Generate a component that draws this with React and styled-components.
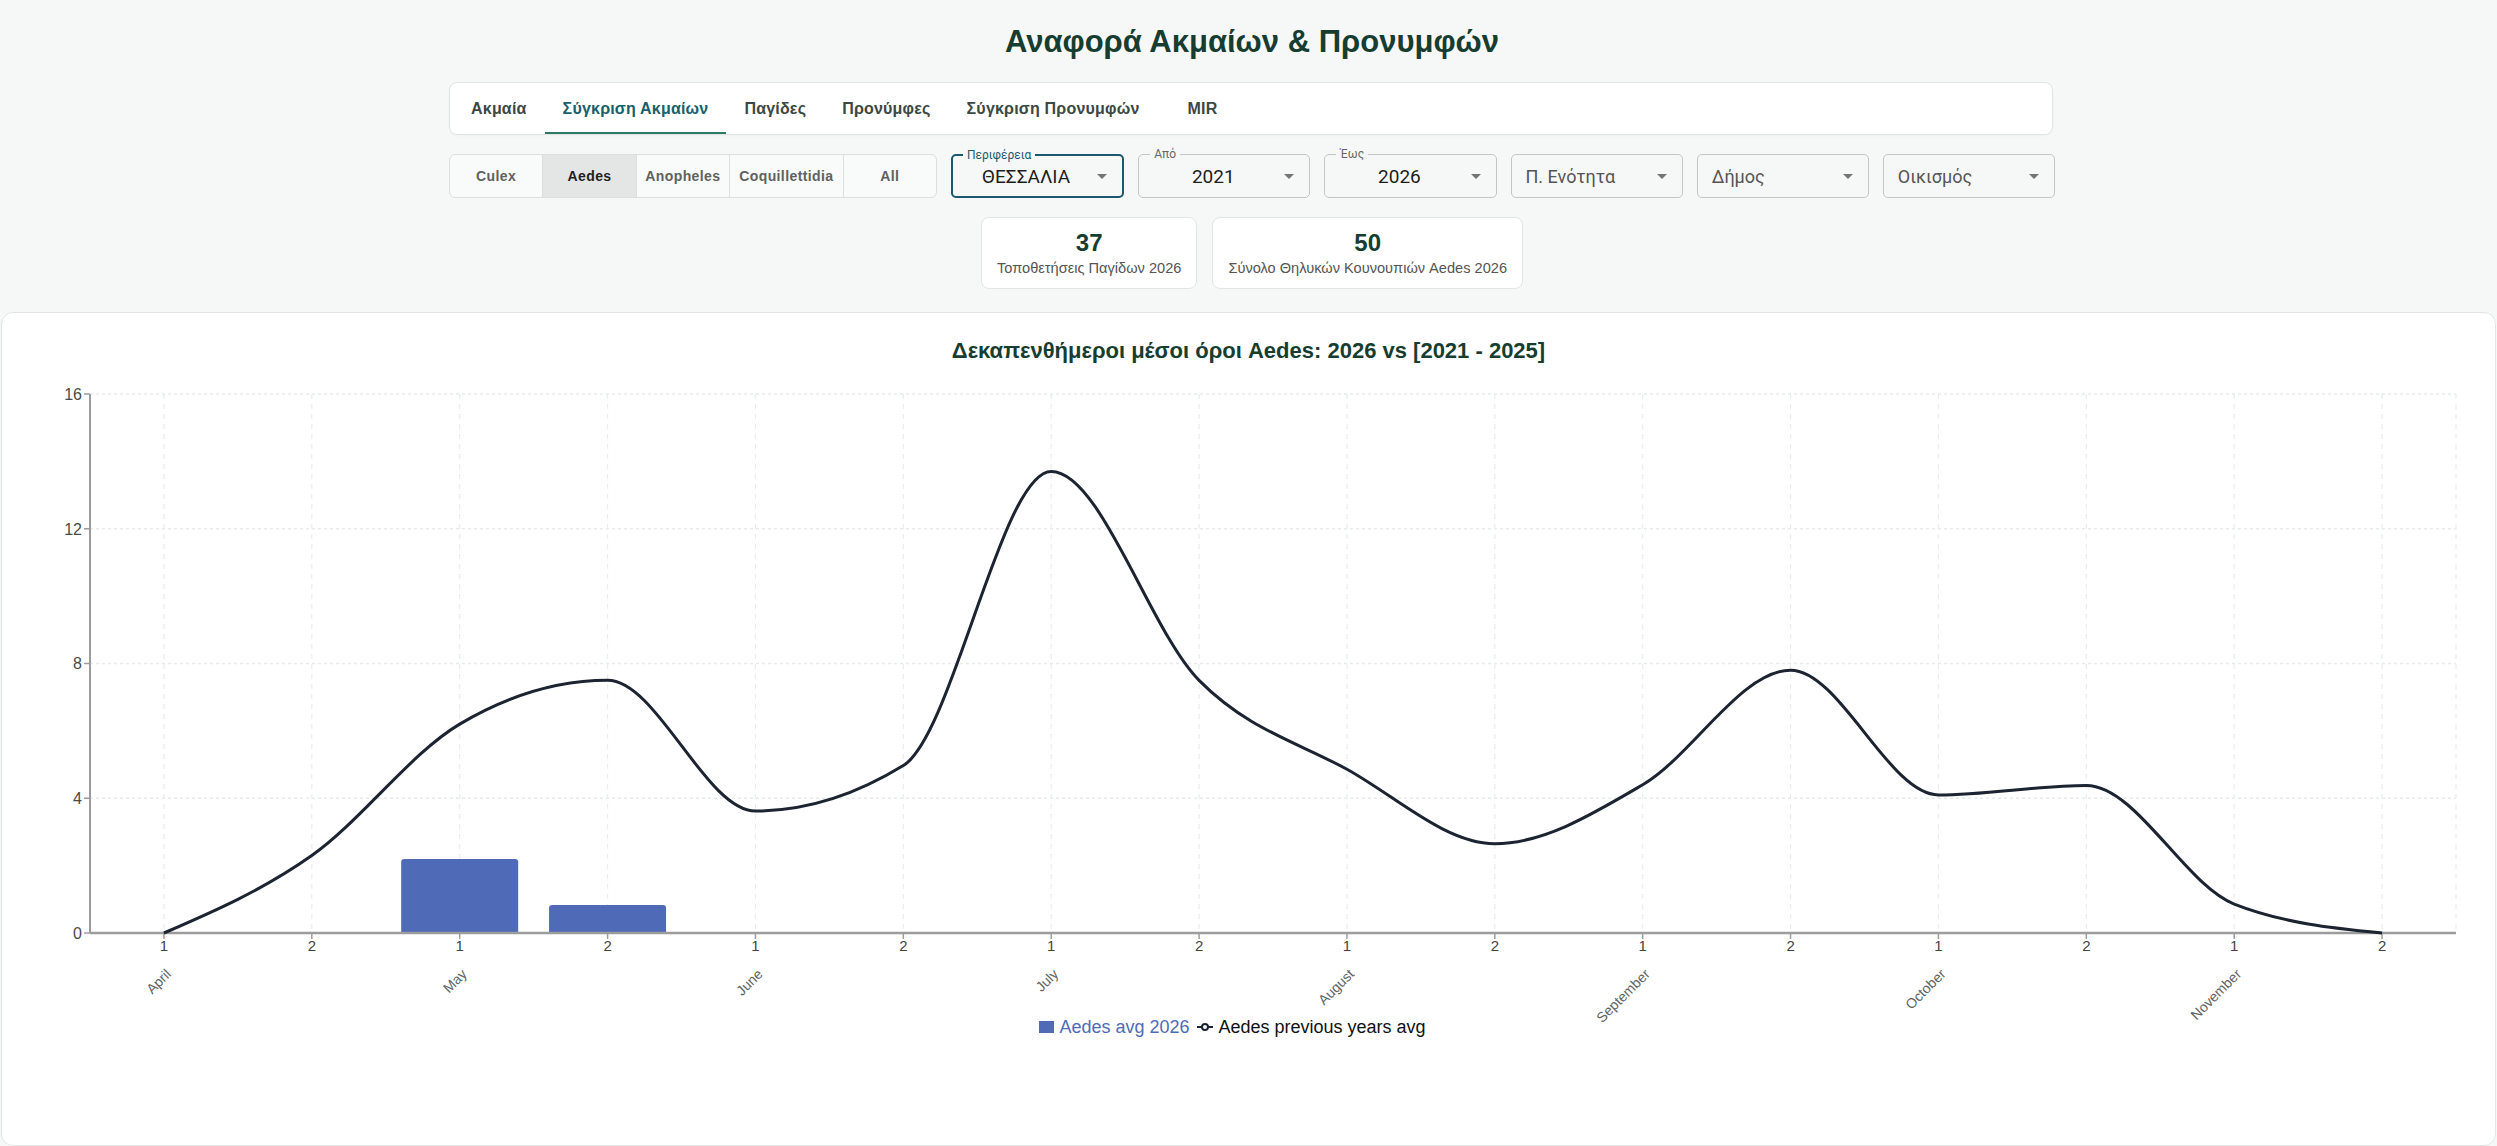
import React from 'react';
import styled, { createGlobalStyle } from 'styled-components';

const GlobalStyle = createGlobalStyle`
  html, body {
    margin: 0;
    padding: 0;
    background: #f6f8f7;
    font-family: "Liberation Sans", Arial, sans-serif;
  }
`;

const Page = styled.div`
  min-height: 1146px;
  padding-top: 23px;
`;

const Container = styled.div`
  width: 1606px;
  margin-left: 449px;
`;

const Title = styled.h1`
  margin: 0 0 21px;
  font-size: 31px;
  line-height: 38px;
  font-weight: 700;
  text-align: center;
  color: #173d31;
`;

const TabBar = styled.nav`
  display: flex;
  width: 1604px;
  height: 53px;
  padding: 0 3px;
  box-sizing: border-box;
  background: #fff;
  border: 1px solid #e0e5e3;
  border-radius: 8px;
  box-shadow: 0 1px 2px rgba(0, 0, 0, 0.03);
`;

const Tab = styled.div`
  display: flex;
  align-items: center;
  justify-content: center;
  min-width: 90px;
  padding: 2px 18px 0;
  box-sizing: border-box;
  font-size: 16px;
  font-weight: 700;
  letter-spacing: 0.2px;
  color: ${(p) => (p.$active ? '#17606d' : '#3b4843')};
  border-bottom: 2px solid ${(p) => (p.$active ? '#2d7a66' : 'transparent')};
`;

const FilterRow = styled.div`
  display: flex;
  gap: 14px;
  margin-top: 19px;
  height: 44px;
`;

const SpeciesGroup = styled.div`
  display: flex;
  width: 486px;
  flex: none;
  border: 1px solid #dcdfde;
  border-radius: 6px;
  overflow: hidden;
  background: #f9fafa;
`;

const SpeciesButton = styled.div`
  flex: ${(p) => (p.$wide ? '1.22' : '1')};
  display: flex;
  align-items: center;
  justify-content: center;
  font-size: 14px;
  font-weight: 700;
  letter-spacing: 0.4px;
  color: ${(p) => (p.$active ? '#1e1f1f' : '#5e625f')};
  background: ${(p) => (p.$active ? '#e4e6e5' : 'transparent')};
  & + & {
    border-left: 1px solid #dcdfde;
  }
`;

const SelectBox = styled.div`
  position: relative;
  flex: 1;
  display: flex;
  align-items: center;
  box-sizing: border-box;
  padding: 0 8px 0 ${(p) => (p.$focused ? '13px' : '14px')};
  border: ${(p) => (p.$focused ? '2px solid #1b5a6c' : '1px solid #c4c6c5')};
  border-radius: 5px;
  font-family: Roboto, "Liberation Sans", sans-serif;
`;

const FloatLabel = styled.span`
  position: absolute;
  top: -8px;
  left: ${(p) => (p.$focused ? '10px' : '11px')};
  padding: 0 4px;
  background: #f6f8f7;
  font-size: 12px;
  line-height: 14px;
  color: ${(p) => (p.$focused ? '#1b5a6c' : '#666')};
`;

const SelectValue = styled.span`
  flex: 1;
  font-size: ${(p) => (p.$placeholder ? '18px' : '19px')};
  text-align: ${(p) => (p.$placeholder ? 'left' : 'center')};
  color: ${(p) => (p.$placeholder ? '#555' : '#1d1d1d')};
  padding-right: ${(p) => (p.$placeholder ? '0' : '4px')};
`;

const Caret = styled.svg`
  width: 24px;
  height: 24px;
  flex: none;
  fill: #757575;
`;

const StatsRow = styled.div`
  display: flex;
  justify-content: center;
  gap: 15px;
  margin-top: 19px;
`;

const StatCard = styled.div`
  display: flex;
  flex-direction: column;
  align-items: center;
  padding: 12px 15px;
  background: #fff;
  border: 1px solid #e1e5e4;
  border-radius: 8px;
  box-sizing: border-box;
  height: 72px;
`;

const StatValue = styled.div`
  font-size: 24px;
  line-height: 26px;
  font-weight: 700;
  color: #173d31;
`;

const StatLabel = styled.div`
  margin-top: 3px;
  font-size: 14.6px;
  line-height: 18px;
  color: #555;
`;

const ChartPanel = styled.section`
  margin: 23px 1px 0;
  height: 834px;
  box-sizing: border-box;
  background: #fff;
  border: 1px solid #e1e6e5;
  border-radius: 12px;
  padding-top: 25px;
`;

const ChartTitle = styled.h2`
  margin: 0;
  font-size: 22px;
  line-height: 26px;
  font-weight: 700;
  text-align: center;
  color: #173d31;
`;

const ChartSvg = styled.svg`
  display: block;
  overflow: visible;
  font-family: "Liberation Sans", Arial, sans-serif;
`;

const Legend = styled.div`
  display: flex;
  justify-content: center;
  align-items: center;
  gap: 8px;
  height: 44px;
  padding-right: 32px;
  font-size: 18px;
`;

const LegendItem = styled.div`
  display: flex;
  align-items: center;
  gap: 5px;
  color: ${(p) => p.$color};
`;

const LegendSwatch = styled.span`
  width: 15px;
  height: 12px;
  background: #4f6bb8;
`;

const TABS = ['Ακμαία', 'Σύγκριση Ακμαίων', 'Παγίδες', 'Προνύμφες', 'Σύγκριση Προνυμφών', 'MIR'];
const SPECIES = ['Culex', 'Aedes', 'Anopheles', 'Coquillettidia', 'All'];

const SELECTS = [
  { label: 'Περιφέρεια', value: 'ΘΕΣΣΑΛΙΑ', focused: true },
  { label: 'Από', value: '2021' },
  { label: 'Έως', value: '2026' },
  { value: 'Π. Ενότητα', placeholder: true },
  { value: 'Δήμος', placeholder: true },
  { value: 'Οικισμός', placeholder: true },
];

const MONTHS = ['April', 'May', 'June', 'July', 'August', 'September', 'October', 'November'];
const PREVIOUS = [0, 2.3, 6.2, 7.5, 3.62, 4.97, 13.7, 7.5, 4.86, 2.65, 4.4, 7.8, 4.1, 4.38, 0.86, 0];
const CURRENT = { 2: 2.2, 3: 0.83 };

// chart geometry (svg space)
const W = 2493;
const H = 641;
const LEFT = 88;
const RIGHT = 2454;
const BAND = (RIGHT - LEFT) / 16;
const Y0 = 569;
const UNIT = (569 - 30) / 16;
const xAt = (k) => LEFT + BAND * (k + 0.5);
const yAt = (v) => Y0 - v * UNIT;

const sign = (v) => (v < 0 ? -1 : 1);

// monotone-x cubic, same maths as d3's curveMonotoneX
const monotonePath = (pts) => {
  const n = pts.length;
  const m = new Array(n).fill(0);
  for (let i = 1; i < n - 1; i += 1) {
    const [x0, y0] = pts[i - 1];
    const [x1, y1] = pts[i];
    const [x2, y2] = pts[i + 1];
    const h0 = x1 - x0;
    const h1 = x2 - x1;
    const s0 = (y1 - y0) / h0;
    const s1 = (y2 - y1) / h1;
    const p = (s0 * h1 + s1 * h0) / (h0 + h1);
    m[i] = (sign(s0) + sign(s1)) * Math.min(Math.abs(s0), Math.abs(s1), 0.5 * Math.abs(p)) || 0;
  }
  const h = pts[1][0] - pts[0][0];
  m[0] = (3 * (pts[1][1] - pts[0][1]) / h - m[1]) / 2;
  const he = pts[n - 1][0] - pts[n - 2][0];
  m[n - 1] = (3 * (pts[n - 1][1] - pts[n - 2][1]) / he - m[n - 2]) / 2;

  let d = `M${pts[0][0]},${pts[0][1]}`;
  for (let i = 0; i < n - 1; i += 1) {
    const [x0, y0] = pts[i];
    const [x1, y1] = pts[i + 1];
    const dx = (x1 - x0) / 3;
    d += `C${x0 + dx},${y0 + dx * m[i]} ${x1 - dx},${y1 - dx * m[i + 1]} ${x1},${y1}`;
  }
  return d;
};

const barPath = (x, y, w, h, r) => (
  `M${x},${y + h}V${y + r}Q${x},${y} ${x + r},${y}H${x + w - r}Q${x + w},${y} ${x + w},${y + r}V${y + h}Z`
);

const Chart = () => {
  const ticks = Array.from({ length: 16 }, (_, k) => k);
  const linePts = PREVIOUS.map((v, k) => [xAt(k), yAt(v)]);
  const barW = 117;

  return (
    <ChartSvg width={W} height={H} viewBox={`0 0 ${W} ${H}`}>
      {/* grid */}
      {[4, 8, 12, 16].map((v) => (
        <line key={`h${v}`} x1={LEFT} x2={RIGHT} y1={yAt(v)} y2={yAt(v)} stroke="#e6ecea" strokeDasharray="3 3" strokeWidth="1.5" />
      ))}
      {[...ticks.map(xAt), RIGHT].map((x) => (
        <line key={`v${x}`} x1={x} x2={x} y1={yAt(16)} y2={Y0} stroke="#e9eded" strokeDasharray="5 5" strokeWidth="1.2" />
      ))}

      {/* bars */}
      {Object.entries(CURRENT).map(([k, v]) => {
        const x = xAt(Number(k)) - barW / 2;
        const y = yAt(v);
        return <path key={k} d={barPath(x, y, barW, Y0 - y, 3)} fill="#4f6bb8" />;
      })}

      {/* axes */}
      <line x1={LEFT} x2={LEFT} y1={yAt(16)} y2={Y0} stroke="#9c9c9c" strokeWidth="2" />
      <line x1={LEFT} x2={RIGHT} y1={Y0} y2={Y0} stroke="#9c9c9c" strokeWidth="2.5" />
      {[0, 4, 8, 12, 16].map((v) => (
        <g key={`y${v}`}>
          <line x1={LEFT - 6} x2={LEFT} y1={yAt(v)} y2={yAt(v)} stroke="#9c9c9c" strokeWidth="1.5" />
          <text x={LEFT - 8} y={yAt(v)} dy="0.36em" textAnchor="end" fontSize="16" fill="#4a4a4a">{v}</text>
        </g>
      ))}
      {ticks.map((k) => (
        <g key={`x${k}`}>
          <line x1={xAt(k)} x2={xAt(k)} y1={Y0} y2={Y0 + 6} stroke="#9c9c9c" strokeWidth="1.5" />
          <text x={xAt(k)} y={Y0 + 18} textAnchor="middle" fontSize="15" fill="#444">{k % 2 === 0 ? '1' : '2'}</text>
          {k % 2 === 0 && (
            <text
              x={xAt(k) + 8}
              y={611}
              textAnchor="end"
              fontSize="14"
              fill="#5f6466"
              transform={`rotate(-45 ${xAt(k) + 8} 611)`}
            >
              {MONTHS[k / 2]}
            </text>
          )}
        </g>
      ))}

      {/* previous years line */}
      <path d={monotonePath(linePts)} fill="none" stroke="#1c2431" strokeWidth="3" strokeLinejoin="round" />
    </ChartSvg>
  );
};

const App = () => (
  <>
    <GlobalStyle />
    <Page>
      <Container>
        <Title>Αναφορά Ακμαίων &amp; Προνυμφών</Title>
        <TabBar>
          {TABS.map((t) => (
            <Tab key={t} $active={t === 'Σύγκριση Ακμαίων'}>{t}</Tab>
          ))}
        </TabBar>

        <FilterRow>
          <SpeciesGroup>
            {SPECIES.map((s) => (
              <SpeciesButton key={s} $active={s === 'Aedes'} $wide={s === 'Coquillettidia'}>{s}</SpeciesButton>
            ))}
          </SpeciesGroup>
          {SELECTS.map((s) => (
            <SelectBox key={s.value} $focused={s.focused}>
              {s.label && <FloatLabel $focused={s.focused}>{s.label}</FloatLabel>}
              <SelectValue $placeholder={s.placeholder}>{s.value}</SelectValue>
              <Caret viewBox="0 0 24 24"><path d="M7 10l5 5 5-5z" /></Caret>
            </SelectBox>
          ))}
        </FilterRow>

        <StatsRow>
          <StatCard>
            <StatValue>37</StatValue>
            <StatLabel>Τοποθετήσεις Παγίδων 2026</StatLabel>
          </StatCard>
          <StatCard>
            <StatValue>50</StatValue>
            <StatLabel>Σύνολο Θηλυκών Κουνουπιών Aedes 2026</StatLabel>
          </StatCard>
        </StatsRow>
      </Container>

      <ChartPanel>
        <ChartTitle>Δεκαπενθήμεροι μέσοι όροι Aedes: 2026 vs [2021 - 2025]</ChartTitle>
        <Chart />
        <Legend>
          <LegendItem $color="#4f6bb8">
            <LegendSwatch />
            Aedes avg 2026
          </LegendItem>
          <LegendItem $color="#111">
            <svg width="16" height="12" viewBox="0 0 16 12">
              <line x1="0" x2="16" y1="6" y2="6" stroke="#1c2431" strokeWidth="2" />
              <circle cx="8" cy="6" r="3" fill="#fff" stroke="#1c2431" strokeWidth="2" />
            </svg>
            Aedes previous years avg
          </LegendItem>
        </Legend>
      </ChartPanel>
    </Page>
  </>
);

export default App;
